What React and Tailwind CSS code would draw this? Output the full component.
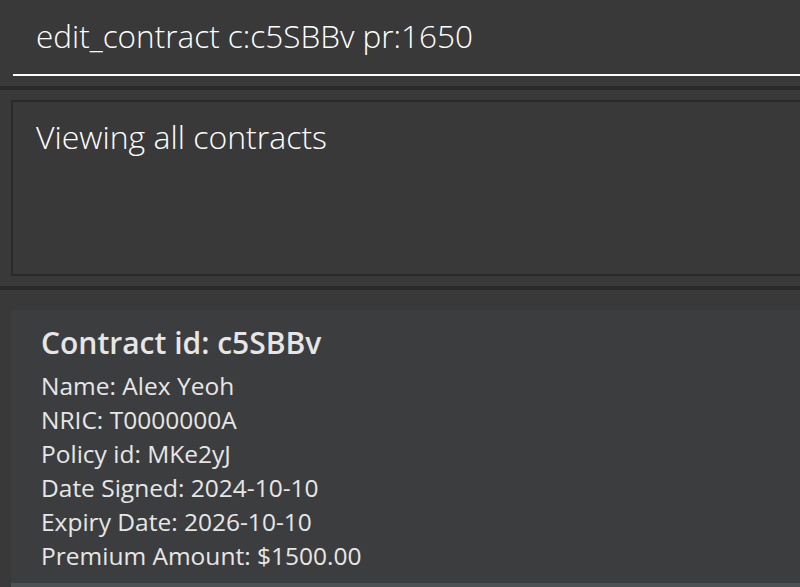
const contract = {
  id: "c5SBBv",
  name: "Alex Yeoh",
  nric: "T0000000A",
  policyId: "MKe2yJ",
  dateSigned: "2024-10-10",
  expiryDate: "2026-10-10",
  premium: "$1500.00",
};

export default function App() {
  return (
    <div className="flex h-[587px] w-[800px] flex-col overflow-hidden bg-[#393939] font-['Segoe_UI','Open_Sans',sans-serif]">
      {/* Command box */}
      <div className="h-[86px] pl-[13px] pt-[12px]">
        <div className="h-[64px] border-b-2 border-white pl-[23px]">
          <p className="text-[31.5px] font-light leading-[48px] text-white">
            edit_contract c:c5SBBv pr:1650
          </p>
        </div>
      </div>

      <div className="h-[4px] bg-[#2a2a2a]" />

      {/* Result display */}
      <div className="py-[10px] pl-[11px]">
        <div className="h-[176px] border-2 border-r-0 border-[#2a2a2a] pl-[23px] pt-[15px]">
          <p className="text-[32px] font-light leading-[40px] text-white">
            Viewing all contracts
          </p>
        </div>
      </div>

      <div className="h-[4px] bg-[#2a2a2a]" />

      {/* Contract list */}
      <div className="flex-1 pl-[11px] pt-[20px]">
        <div className="h-[273px] bg-[#3c3d3f] pl-[30px] pt-[10px] text-[#e6e6e6]">
          <h2 className="mb-[3px] text-[30px] font-semibold leading-[46px]">
            Contract id: {contract.id}
          </h2>
          <p className="text-[24.5px] leading-[34px]">Name: {contract.name}</p>
          <p className="text-[24.5px] leading-[34px]">NRIC: {contract.nric}</p>
          <p className="text-[24.5px] leading-[34px]">Policy id: {contract.policyId}</p>
          <p className="text-[24.5px] leading-[34px]">Date Signed: {contract.dateSigned}</p>
          <p className="text-[24.5px] leading-[34px]">Expiry Date: {contract.expiryDate}</p>
          <p className="text-[24.5px] leading-[34px]">Premium Amount: {contract.premium}</p>
        </div>
        <div className="h-[4px] bg-[#4b5253]" />
      </div>
    </div>
  );
}
